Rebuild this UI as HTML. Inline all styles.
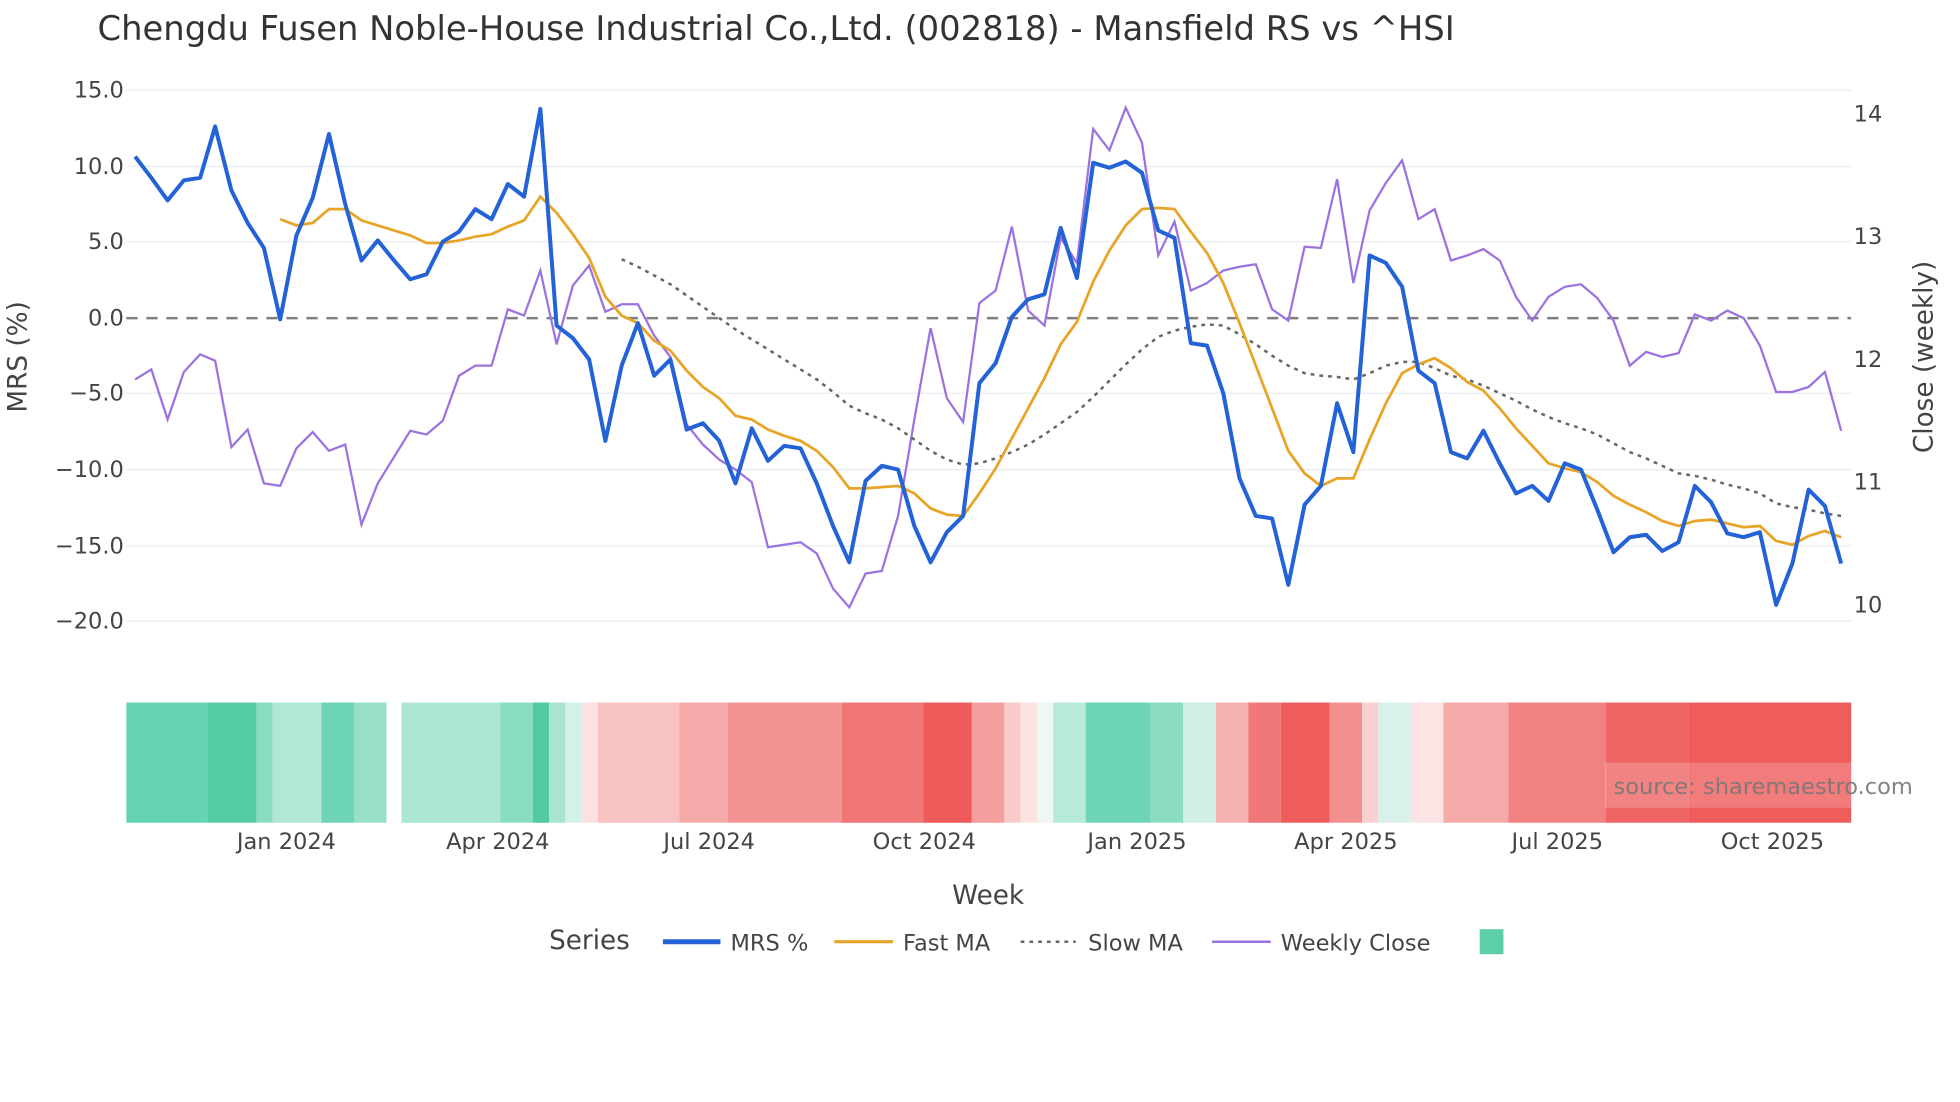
<!DOCTYPE html>
<html><head><meta charset="utf-8"><style>
html,body{margin:0;padding:0;background:#fff;}
svg{display:block;}
text{font-family:"DejaVu Sans","Liberation Sans",sans-serif;}
</style></head><body>
<svg width="1960" height="1102" viewBox="0 0 1567 880" preserveAspectRatio="none" xmlns="http://www.w3.org/2000/svg">
<rect width="1567" height="880" fill="#fff"/>
<text x="78" y="32" font-size="27" fill="#333">Chengdu Fusen Noble-House Industrial Co.,Ltd. (002818) - Mansfield RS vs ^HSI</text>
<g stroke="#e8ecf2" stroke-width="1">
<line x1="101" x2="1480" y1="72" y2="72"/><line x1="101" x2="1480" y1="133" y2="133"/><line x1="101" x2="1480" y1="193" y2="193"/><line x1="101" x2="1480" y1="314" y2="314"/><line x1="101" x2="1480" y1="375" y2="375"/><line x1="101" x2="1480" y1="436" y2="436"/><line x1="101" x2="1480" y1="496" y2="496"/>
</g>
<line x1="101" x2="1480" y1="254" y2="254" stroke="#7f7f7f" stroke-width="2" stroke-dasharray="9,7"/>
<g font-size="18" fill="#444" text-anchor="end">
<text x="99" y="78">15.0</text><text x="99" y="139">10.0</text><text x="99" y="199">5.0</text><text x="99" y="260">0.0</text><text x="99" y="320">−5.0</text><text x="99" y="381">−10.0</text><text x="99" y="442">−15.0</text><text x="99" y="502">−20.0</text>
</g>
<g font-size="18" fill="#444">
<text x="1482" y="97">14</text><text x="1482" y="195">13</text><text x="1482" y="293">12</text><text x="1482" y="391">11</text><text x="1482" y="489">10</text>
</g>
<text transform="translate(21,285) rotate(-90)" font-size="21" fill="#444" text-anchor="middle">MRS (%)</text>
<text transform="translate(1545,285) rotate(-90)" font-size="21" fill="#444" text-anchor="middle">Close (weekly)</text>
<polyline fill="none" stroke="#9b72e0" stroke-width="1.8" points="108,303 121,295 134,335 147,297 160,283 172,288 185,357 198,343 211,386 224,388 237,358 250,345 263,360 276,355 289,419 302,386 315,365 328,344 341,347 354,336 367,300 380,292 393,292 406,247 419,252 432,216 445,275 458,228 471,212 484,249 497,243 510,243 523,268 536,285 549,339 562,355 575,367 588,375 601,385 614,437 627,435 640,433 653,442 666,470 679,485 692,458 705,456 718,412 731,335 744,262 757,318 770,337 783,242 796,232 809,181 822,248 835,260 848,190 861,210 874,103 887,120 900,86 913,114 926,204 939,177 952,232 965,226 978,216 991,213 1004,211 1017,247 1030,256 1043,197 1056,198 1069,143 1082,226 1095,168 1108,146 1121,128 1134,175 1147,167 1160,208 1173,204 1186,199 1199,208 1212,237 1225,256 1238,237 1251,229 1264,227 1277,238 1290,256 1303,292 1316,281 1329,285 1342,282 1355,251 1368,256 1381,248 1394,254 1407,276 1420,313 1433,313 1446,309 1459,297 1472,344"/>
<polyline fill="none" stroke="#666" stroke-width="2" stroke-dasharray="3,4" points="497,207 510,213 523,220 536,227 549,236 562,245 575,254 588,263 601,271 614,279 627,287 640,295 653,303 666,313 679,324 692,330 705,335 718,342 731,351 744,360 757,367 770,371 783,370 796,366 809,361 822,355 835,347 848,338 861,329 874,317 887,304 900,291 913,279 926,269 939,264 952,261 965,259 978,260 991,267 1004,275 1017,284 1030,292 1043,298 1056,300 1069,301 1082,303 1095,298 1108,292 1121,289 1134,289 1147,294 1160,300 1173,303 1186,308 1199,314 1212,320 1225,327 1238,333 1251,338 1264,342 1277,347 1290,354 1303,361 1316,366 1329,372 1342,378 1355,380 1368,383 1381,387 1394,390 1407,394 1420,402 1433,405 1446,407 1459,410 1472,412"/>
<polyline fill="none" stroke="#e8a427" stroke-width="2.2" points="224,175 237,180 250,178 263,167 276,167 289,176 302,180 315,184 328,188 341,194 354,194 367,192 380,189 393,187 406,181 419,176 432,157 445,170 458,187 471,206 484,237 497,252 510,258 523,272 536,280 549,296 562,309 575,318 588,332 601,335 614,343 627,348 640,352 653,360 666,373 679,390 692,390 705,389 718,388 731,394 744,406 757,411 770,412 783,394 796,374 809,350 822,326 835,302 848,275 861,257 874,225 887,200 900,180 913,167 926,166 939,167 952,185 965,202 978,226 991,258 1004,292 1017,326 1030,360 1043,378 1056,388 1069,382 1082,382 1095,351 1108,322 1121,298 1134,291 1147,286 1160,294 1173,305 1186,312 1199,326 1212,342 1225,356 1238,370 1251,374 1264,377 1277,385 1290,396 1303,403 1316,409 1329,416 1342,420 1355,416 1368,415 1381,418 1394,421 1407,420 1420,432 1433,435 1446,428 1459,424 1472,429"/>
<polyline fill="none" stroke="#2462d8" stroke-width="3.2" stroke-linejoin="round" points="108,125 121,142 134,160 147,144 160,142 172,101 185,152 198,178 211,198 224,255 237,188 250,158 263,107 276,163 289,208 302,192 315,208 328,223 341,219 354,193 367,185 380,167 393,175 406,147 419,157 432,87 445,260 458,270 471,287 484,352 497,292 510,258 523,300 536,287 549,343 562,338 575,352 588,386 601,342 614,368 627,356 640,358 653,386 666,420 679,449 692,384 705,372 718,375 731,420 744,449 757,425 770,412 783,306 796,290 809,253 822,239 835,235 848,182 861,222 874,130 887,134 900,129 913,138 926,184 939,190 952,274 965,276 978,314 991,382 1004,412 1017,414 1030,467 1043,403 1056,388 1069,322 1082,361 1095,204 1108,210 1121,229 1134,296 1147,306 1160,361 1173,366 1186,344 1199,370 1212,394 1225,388 1238,400 1251,370 1264,375 1277,407 1290,441 1303,429 1316,427 1329,440 1342,433 1355,388 1368,401 1381,426 1394,429 1407,425 1420,483 1433,450 1446,391 1459,404 1472,450"/>
<g>
<rect x="101" y="561" width="65" height="96" fill="#66d3b3"/>
<rect x="166" y="561" width="39" height="96" fill="#55cba5"/>
<rect x="205" y="561" width="13" height="96" fill="#88dcc0"/>
<rect x="218" y="561" width="39" height="96" fill="#b0e7d6"/>
<rect x="257" y="561" width="26" height="96" fill="#6dd4b5"/>
<rect x="283" y="561" width="26" height="96" fill="#97dfc6"/>
<rect x="321" y="561" width="79" height="96" fill="#abe5d3"/>
<rect x="400" y="561" width="26" height="96" fill="#88dcc0"/>
<rect x="426" y="561" width="13" height="96" fill="#52c9a0"/>
<rect x="439" y="561" width="13" height="96" fill="#a8e4d1"/>
<rect x="452" y="561" width="13" height="96" fill="#d3f1e7"/>
<rect x="465" y="561" width="13" height="96" fill="#fde0e0"/>
<rect x="478" y="561" width="65" height="96" fill="#f8c2c2"/>
<rect x="543" y="561" width="39" height="96" fill="#f6abab"/>
<rect x="582" y="561" width="91" height="96" fill="#f29494"/>
<rect x="673" y="561" width="65" height="96" fill="#f07676"/>
<rect x="738" y="561" width="39" height="96" fill="#ef5b5b"/>
<rect x="777" y="561" width="26" height="96" fill="#f49e9e"/>
<rect x="803" y="561" width="13" height="96" fill="#f8caca"/>
<rect x="816" y="561" width="13" height="96" fill="#fde2e2"/>
<rect x="829" y="561" width="13" height="96" fill="#eef7f2"/>
<rect x="842" y="561" width="26" height="96" fill="#b8eadb"/>
<rect x="868" y="561" width="52" height="96" fill="#6dd4b5"/>
<rect x="920" y="561" width="26" height="96" fill="#8bdcc3"/>
<rect x="946" y="561" width="26" height="96" fill="#d0f0e6"/>
<rect x="972" y="561" width="26" height="96" fill="#f5b0b0"/>
<rect x="998" y="561" width="26" height="96" fill="#f07878"/>
<rect x="1024" y="561" width="39" height="96" fill="#ee5c5c"/>
<rect x="1063" y="561" width="26" height="96" fill="#f29090"/>
<rect x="1089" y="561" width="13" height="96" fill="#fbd0d0"/>
<rect x="1102" y="561" width="26" height="96" fill="#d8f2ea"/>
<rect x="1128" y="561" width="26" height="96" fill="#fde4e4"/>
<rect x="1154" y="561" width="52" height="96" fill="#f5aaaa"/>
<rect x="1206" y="561" width="78" height="96" fill="#f08282"/>
<rect x="1284" y="561" width="66" height="96" fill="#ef6464"/>
<rect x="1350" y="561" width="130" height="96" fill="#ef5c5c"/>
</g>
<rect x="1283" y="609" width="197" height="36" fill="#fff" fill-opacity="0.2"/>
<text x="1290" y="634" font-size="18" fill="#777" fill-opacity="0.9">source: sharemaestro.com</text>
<g font-size="18" fill="#444" text-anchor="middle">
<text x="229" y="678">Jan 2024</text><text x="398" y="678">Apr 2024</text><text x="567" y="678">Jul 2024</text><text x="739" y="678">Oct 2024</text><text x="909" y="678">Jan 2025</text><text x="1076" y="678">Apr 2025</text><text x="1245" y="678">Jul 2025</text><text x="1417" y="678">Oct 2025</text>
</g>
<text x="790" y="722" font-size="21" fill="#444" text-anchor="middle">Week</text>
<text x="439" y="758" font-size="21" fill="#444">Series</text>
<line x1="530" x2="576" y1="752" y2="752" stroke="#2462d8" stroke-width="4"/>
<text x="584" y="759" font-size="18" fill="#444">MRS %</text>
<line x1="667" x2="714" y1="752" y2="752" stroke="#e8a427" stroke-width="2.5"/>
<text x="722" y="759" font-size="18" fill="#444">Fast MA</text>
<line x1="816" x2="860" y1="752" y2="752" stroke="#666" stroke-width="2" stroke-dasharray="3,4"/>
<text x="870" y="759" font-size="18" fill="#444">Slow MA</text>
<line x1="969" x2="1016" y1="752" y2="752" stroke="#9b72e0" stroke-width="2"/>
<text x="1024" y="759" font-size="18" fill="#444">Weekly Close</text>
<rect x="1183" y="742" width="19" height="20" fill="#5ccfaa"/>
</svg>
</body></html>
